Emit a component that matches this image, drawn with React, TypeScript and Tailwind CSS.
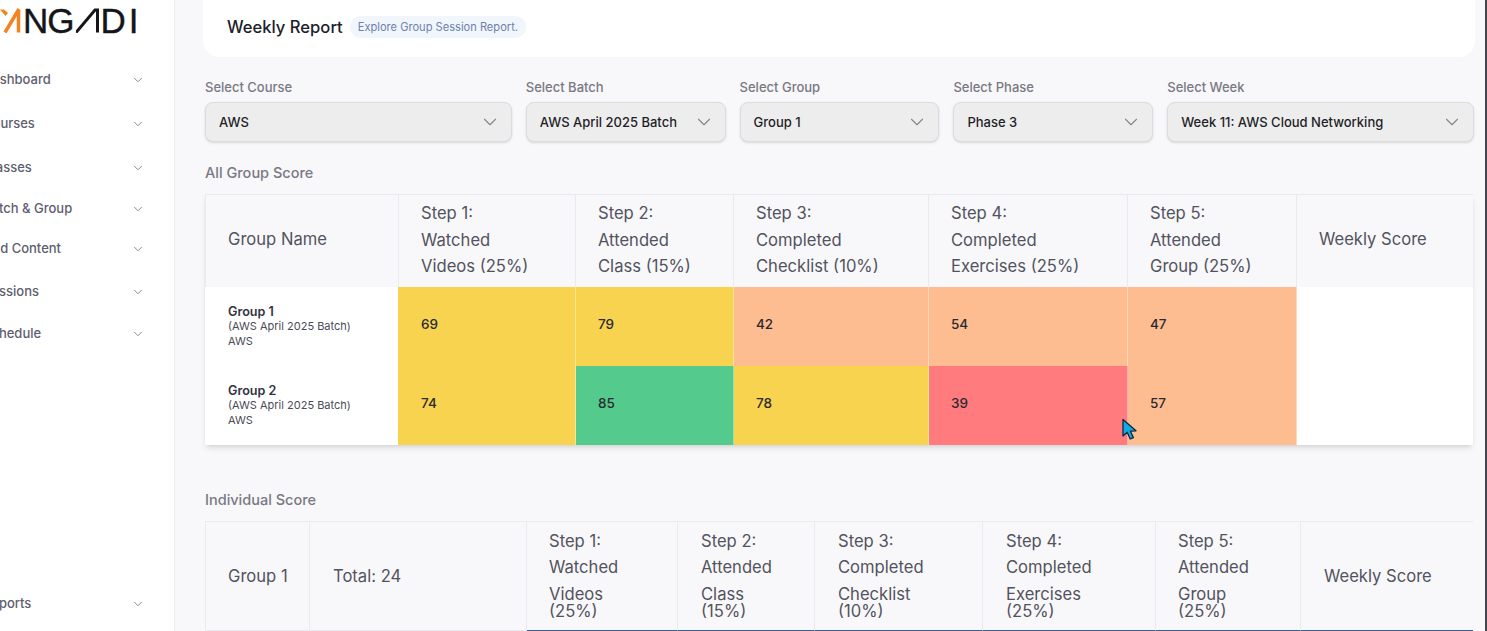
import { ChevronDown } from "lucide-react";

const navItems = [
  { label: "Dashboard", h: "h-[44px]" },
  { label: "Courses", h: "h-[44px]" },
  { label: "Classes", h: "h-[44px]" },
  { label: "Batch & Group", h: "h-[38px]" },
  { label: "Add Content", h: "h-[42px]" },
  { label: "Sessions", h: "h-[44px]" },
  { label: "Schedule", h: "h-[40px]" },
];

const filters = [
  { label: "Select Course", value: "AWS", w: "w-[307px]" },
  { label: "Select Batch", value: "AWS April 2025 Batch", w: "w-[200px]" },
  { label: "Select Group", value: "Group 1", w: "w-[200px]" },
  { label: "Select Phase", value: "Phase 3", w: "w-[200px]" },
  { label: "Select Week", value: "Week 11: AWS Cloud Networking", w: "w-[307px]" },
];

const yellow = "bg-[#f8d350]";
const orange = "bg-[#febd91]";
const green = "bg-[#54cb8c]";
const red = "bg-[#ff7b7e]";

const groups = [
  {
    name: "Group 1",
    scores: [
      { v: 69, c: yellow },
      { v: 79, c: yellow },
      { v: 42, c: orange },
      { v: 54, c: orange },
      { v: 47, c: orange },
    ],
  },
  {
    name: "Group 2",
    scores: [
      { v: 74, c: yellow },
      { v: 85, c: green },
      { v: 78, c: yellow },
      { v: 39, c: red },
      { v: 57, c: orange },
    ],
  },
];

const groupCols = ["w-[177px]", "w-[158px]", "w-[195px]", "w-[199px]", "w-[169px]"];
// score cells start 1px left of the header divider
const scoreCols = ["w-[178px] pl-[23px]", "w-[158px] pl-[22px]", "w-[195px] pl-[22px]", "w-[199px] pl-[22px]", "w-[169px] pl-[22px]"];
const groupHeads = [
  ["Step 1:", "Watched", "Videos (25%)"],
  ["Step 2:", "Attended", "Class (15%)"],
  ["Step 3:", "Completed", "Checklist (10%)"],
  ["Step 4:", "Completed", "Exercises (25%)"],
  ["Step 5:", "Attended", "Group (25%)"],
];

const individualHeads = [
  { lines: ["Step 1:", "Watched", "Videos", "(25%)"], w: "w-[151px] pl-[22px]" },
  { lines: ["Step 2:", "Attended", "Class", "(15%)"], w: "w-[137px] pl-[23px]" },
  { lines: ["Step 3:", "Completed", "Checklist", "(10%)"], w: "w-[168px] pl-[23px]" },
  { lines: ["Step 4:", "Completed", "Exercises", "(25%)"], w: "w-[173px] pl-[23px]" },
  { lines: ["Step 5:", "Attended", "Group", "(25%)"], w: "w-[145px] pl-[22px]" },
];

function Logo() {
  return (
    <div className="flex h-[25px] items-center text-[#15151a]">
      <svg width="23" height="25" viewBox="0 0 23 25" className="shrink-0">
        <path d="M0 1.5h4L8 5l-2.5 3z" fill="#f58220" />
        <path d="M19 1L5 24.5" fill="none" stroke="#f58220" strokeWidth="3.5" />
        <path d="M18.5 2v22.5" fill="none" stroke="#f58220" strokeWidth="3.5" />
      </svg>
      <span className="text-[35px] leading-none tracking-[-1px] font-['Liberation_Sans',sans-serif] [-webkit-text-stroke:0.4px_#15151a]">NG</span>
      <svg width="25" height="25" viewBox="0 0 25 25" className="ml-[2px] shrink-0">
        <path d="M0 24.5L19 2h2.5v22.5" fill="none" stroke="currentColor" strokeWidth="3" />
      </svg>
      <span className="text-[35px] leading-none tracking-[3px] font-['Liberation_Sans',sans-serif] [-webkit-text-stroke:0.4px_#15151a]">DI</span>
    </div>
  );
}

function Sidebar() {
  return (
    <aside className="flex h-full w-[175px] shrink-0 flex-col overflow-hidden border-r border-[#eeeef1] bg-white">
      <div className="pt-[8px]">
        <Logo />
      </div>
      <nav className="-ml-[17px] mt-[25px] flex flex-col">
        {navItems.map((item) => (
          <div key={item.label} className={`flex items-center justify-between pr-[29px] ${item.h}`}>
            <span className="text-[13px] font-medium text-[#5e5e6e]">{item.label}</span>
            <ChevronDown size={14} strokeWidth={1.5} className="text-[#77778a]" />
          </div>
        ))}
      </nav>
      <div className="-ml-[17px] mt-auto mb-[5px] flex h-[44px] items-center justify-between pr-[29px]">
        <span className="text-[13px] font-medium text-[#5e5e6e]">Reports</span>
        <ChevronDown size={14} strokeWidth={1.5} className="text-[#77778a]" />
      </div>
    </aside>
  );
}

function Cursor() {
  return (
    <svg width="18" height="24" viewBox="0 0 18 24" className="absolute left-[1121px] top-[418px] z-10">
      <path d="M2 1.5V18l4.2-3.7 3 6.7 3.2-1.4-3-6.4 5.6-.4z" fill="#12a9e8" stroke="#0b2a3a" strokeWidth="1.3" strokeLinejoin="round" />
    </svg>
  );
}

export default function App() {
  return (
    <div className="relative flex h-[631px] w-[1487px] overflow-hidden bg-[#f8f7fa] font-['Inter',sans-serif]">
      <Sidebar />
      <Cursor />
      <main className="min-w-0 flex-1 border-r-2 border-[#44444c] pl-[30px] pr-[11px]">
        <header className="-ml-[2px] -mt-[4px] flex h-[61px] w-[1272px] items-center gap-[7px] rounded-b-[16px] bg-white pl-[24px] pt-[1px]">
          <h1 className="text-[16.6px] font-medium text-[#20202a]">Weekly Report</h1>
          <span className="rounded-full bg-[#f1f6fd] px-[8px] py-[3px] text-[11.1px] text-[#6f81ab]">Explore Group Session Report.</span>
        </header>

        <div className="mt-[22px] flex w-[1269px] gap-[14px]">
          {filters.map((f) => (
            <div key={f.label} className={f.w}>
              <label className="block text-[13px] leading-[16px] font-medium text-[#797984]">{f.label}</label>
              <div className="mt-[7px] flex h-[40px] items-center justify-between rounded-[8px] border border-[#dcdce0] bg-[#ededee] pl-[13px] pr-[10px] shadow-sm">
                <span className="pt-[2px] text-[13px] font-medium text-[#1f1f27]">{f.value}</span>
                <ChevronDown size={22} strokeWidth={1.25} className="text-[#85858e]" />
              </div>
            </div>
          ))}
        </div>

        <h2 className="mt-[21px] text-[14.5px] leading-[20px] font-medium text-[#797984]">All Group Score</h2>

        <section className="mt-[11px] w-[1268px] bg-white shadow-md">
          <div className="flex h-[93px] border-t border-[#ebebef] bg-[#f8f8fa] text-[16.6px] leading-[26.5px] text-[#53535e]">
            <div className="flex w-[194px] items-center border-x border-[#ebebef] pb-[3px] pl-[22px]">Group Name</div>
            {groupHeads.map((lines, i) => (
              <div key={lines[0]} className={`flex flex-col justify-center border-r border-[#ebebef] pb-[2px] pl-[22px] ${groupCols[i]}`}>
                {lines.map((line) => (
                  <span key={line} className="whitespace-nowrap">{line}</span>
                ))}
              </div>
            ))}
            <div className="flex flex-1 items-center pb-[3px] pl-[22px]">Weekly Score</div>
          </div>
          {groups.map((g) => (
            <div key={g.name} className="flex h-[79px]">
              <div className="flex w-[193px] flex-col justify-center pl-[23px] text-[11px] leading-[15px] text-[#4b4b57]">
                <span className="text-[12.6px] font-semibold text-[#33333f]">{g.name}</span>
                <span>(AWS April 2025 Batch)</span>
                <span>AWS</span>
              </div>
              {g.scores.map((s, i) => (
                <div key={i} className={`flex items-center border-r border-white/40 pb-[4px] text-[13.5px] font-medium text-[#2a2a30] ${scoreCols[i]} ${s.c}`}>
                  {s.v}
                </div>
              ))}
              <div className="flex-1" />
            </div>
          ))}
        </section>

        <h2 className="mt-[45px] text-[14.5px] leading-[20px] font-medium text-[#797984]">Individual Score</h2>

        <section className="mt-[11px] w-[1268px]">
          <div className="flex h-[110px] border-t border-[#ebebef] bg-[#f8f8fa] text-[16.6px] text-[#53535e]">
            <div className="flex w-[105px] items-center border-x border-b border-[#ebebef] pl-[22px]">Group 1</div>
            <div className="flex w-[217px] items-center border-r border-b border-[#ebebef] pl-[23px]">Total: 24</div>
            {individualHeads.map((h) => (
              <div key={h.lines[0]} className={`flex flex-col justify-center border-r border-b border-r-[#ebebef] border-b-[#3f5a92] ${h.w}`}>
                <span className="leading-[26.5px]">{h.lines[0]}</span>
                <span className="leading-[26.5px]">{h.lines[1]}</span>
                <span className="leading-[26.5px]">{h.lines[2]}</span>
                <span className="-mt-[9px] leading-[26.5px]">{h.lines[3]}</span>
              </div>
            ))}
            <div className="flex flex-1 items-center border-b border-b-[#3f5a92] pl-[23px]">Weekly Score</div>
          </div>
        </section>
      </main>
    </div>
  );
}
